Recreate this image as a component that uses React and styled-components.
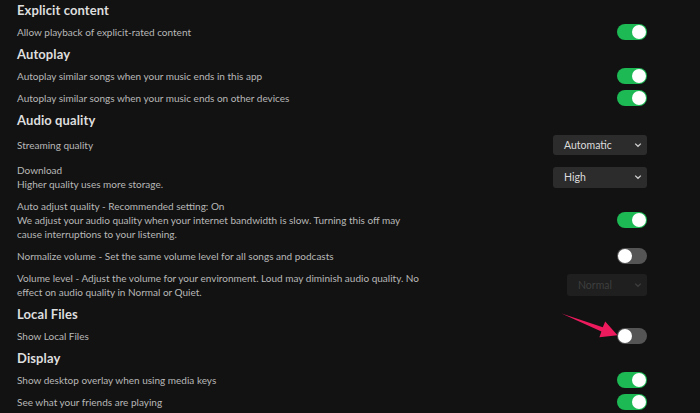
import styled, { createGlobalStyle } from 'styled-components';

const GlobalStyle = createGlobalStyle`
  html, body {
    margin: 0;
    padding: 0;
    background: #121212;
    overflow: hidden;
  }
  body {
    font-family: Lato, "Noto Sans", "Liberation Sans", sans-serif;
  }
`;

const Page = styled.div`
  width: 700px;
  height: 413px;
  box-sizing: border-box;
  padding: 0 53px 0 17px;
  background: #121212;
  overflow: hidden;
`;

const List = styled.div`
  display: flex;
  flex-direction: column;
  margin-top: -1px;
`;

const Heading = styled.h2`
  margin: 0;
  height: 22px;
  display: flex;
  align-items: center;
  font-size: 13px;
  font-weight: 700;
  color: #dedede;
  letter-spacing: 0.1px;
`;

const Row = styled.div`
  display: flex;
  justify-content: space-between;
  align-items: center;
  padding: 4px 0;
  min-height: ${(p) => p.$minHeight || 14}px;
`;

const Label = styled.div`
  font-size: 10px;
  line-height: 14px;
  color: #b8b8b8;
`;

const Control = styled.div`
  position: relative;
  display: flex;
  align-items: center;
  justify-content: flex-end;
  height: 14px;
`;

const Track = styled.div`
  position: relative;
  width: 30px;
  height: 16px;
  border-radius: 8px;
  background: ${(p) => (p.$on ? '#1db954' : '#555555')};
  display: flex;
  align-items: center;
  justify-content: ${(p) => (p.$on ? 'flex-end' : 'flex-start')};
  padding: 0 1px;
  box-sizing: border-box;
`;

const Knob = styled.div`
  width: 14px;
  height: 14px;
  border-radius: 50%;
  background: #ffffff;
`;

const Select = styled.div`
  width: ${(p) => p.$width}px;
  height: ${(p) => p.$height}px;
  box-sizing: border-box;
  border-radius: 3px;
  background: ${(p) => (p.$disabled ? '#1f1f1f' : '#2c2c2c')};
  color: ${(p) => (p.$disabled ? '#3e3e3e' : '#dcdcdc')};
  font-size: 10.5px;
  display: flex;
  align-items: center;
  justify-content: space-between;
  padding: 0 5px 0 11px;
`;

const Arrow = styled.svg`
  position: absolute;
  left: -56px;
  top: -24px;
  overflow: visible;
`;

function Toggle({ on }) {
  return (
    <Track $on={on}>
      <Knob />
    </Track>
  );
}

function Chevron({ color }) {
  return (
    <svg width="8" height="6" viewBox="0 0 8 6">
      <path d="M1.2 1.6 L4 4.3 L6.8 1.6" fill="none" stroke={color} strokeWidth="1.3" />
    </svg>
  );
}

function Dropdown({ value, width, height, disabled }) {
  return (
    <Select $width={width} $height={height} $disabled={disabled}>
      <span>{value}</span>
      <Chevron color={disabled ? '#3e3e3e' : '#cfcfcf'} />
    </Select>
  );
}

export default function App() {
  return (
    <Page>
      <GlobalStyle />
      <List>
        <Heading>Explicit content</Heading>
        <Row>
          <Label>Allow playback of explicit-rated content</Label>
          <Control><Toggle on /></Control>
        </Row>

        <Heading>Autoplay</Heading>
        <Row>
          <Label>Autoplay similar songs when your music ends in this app</Label>
          <Control><Toggle on /></Control>
        </Row>
        <Row>
          <Label>Autoplay similar songs when your music ends on other devices</Label>
          <Control><Toggle on /></Control>
        </Row>

        <Heading>Audio quality</Heading>
        <Row $minHeight={20}>
          <Label>Streaming quality</Label>
          <Control><Dropdown value="Automatic" width={94} height={20} /></Control>
        </Row>
        <Row>
          <Label>
            Download
            <br />
            Higher quality uses more storage.
          </Label>
          <Control><Dropdown value="High" width={94} height={21} /></Control>
        </Row>
        <Row>
          <Label>
            Auto adjust quality - Recommended setting: On
            <br />
            We adjust your audio quality when your internet bandwidth is slow. Turning this off may
            <br />
            cause interruptions to your listening.
          </Label>
          <Control><Toggle on /></Control>
        </Row>
        <Row>
          <Label>Normalize volume - Set the same volume level for all songs and podcasts</Label>
          <Control><Toggle /></Control>
        </Row>
        <Row>
          <Label>
            Volume level - Adjust the volume for your environment. Loud may diminish audio quality. No
            <br />
            effect on audio quality in Normal or Quiet.
          </Label>
          <Control><Dropdown value="Normal" width={80} height={22} disabled /></Control>
        </Row>

        <Heading>Local Files</Heading>
        <Row>
          <Label>Show Local Files</Label>
          <Control>
            <Toggle />
            <Arrow width="60" height="35" viewBox="561 303 60 35">
              <polygon
                points="561.5,311.5 602.8,325.2 605.2,319.6 617.5,333.2 599.4,335.2 601.4,329.4"
                fill="#ee1a5e"
              />
            </Arrow>
          </Control>
        </Row>

        <Heading>Display</Heading>
        <Row>
          <Label>Show desktop overlay when using media keys</Label>
          <Control><Toggle on /></Control>
        </Row>
        <Row>
          <Label>See what your friends are playing</Label>
          <Control><Toggle on /></Control>
        </Row>
      </List>
    </Page>
  );
}
